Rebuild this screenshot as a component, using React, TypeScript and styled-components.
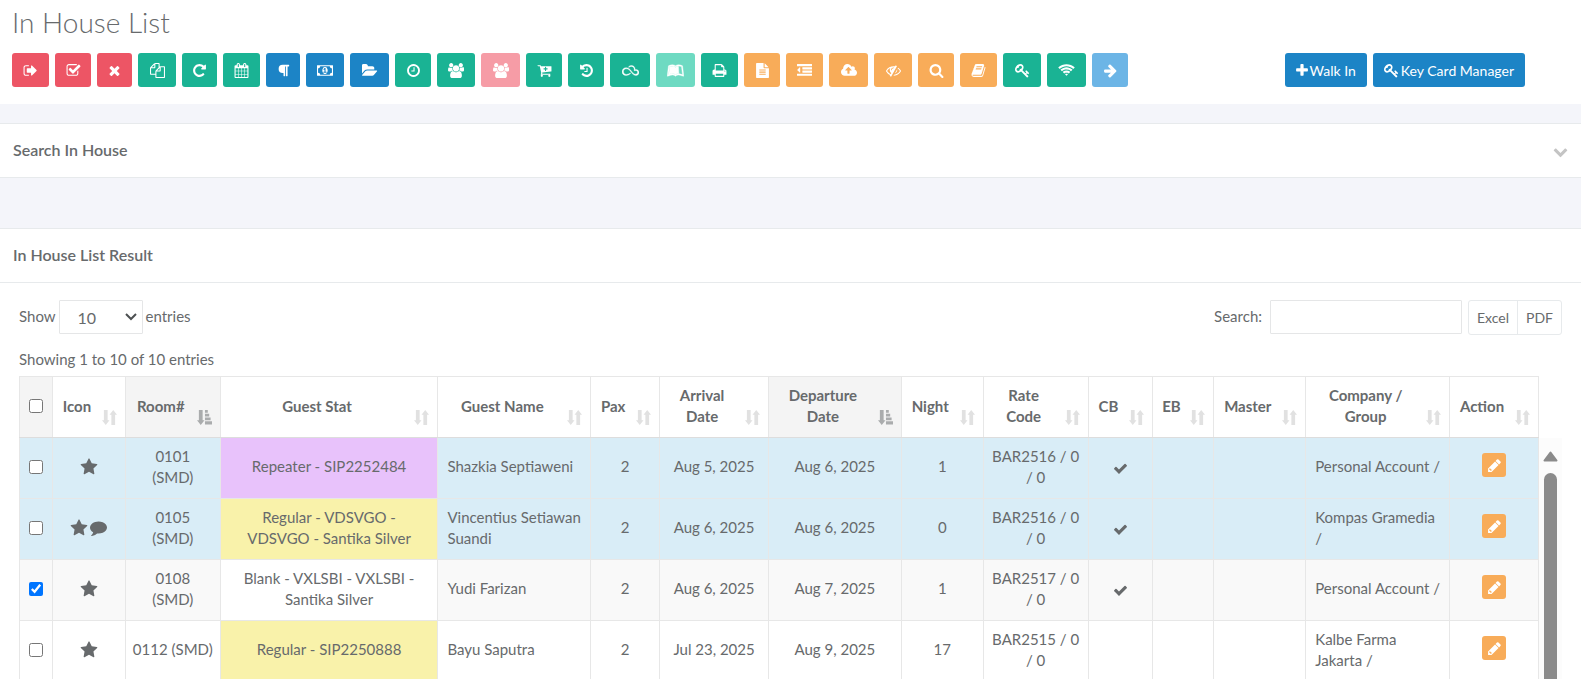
import React from 'react';
import styled, { createGlobalStyle, css } from 'styled-components';
import { FaLeanpub, FaParagraph, FaSkyatlas } from 'react-icons/fa';

const Global = createGlobalStyle`
  *, *::before, *::after { box-sizing: border-box; }
  body {
    margin: 0;
    background: #f4f5fa;
    color: #676a6c;
    font-family: Lato, "Noto Sans", sans-serif;
    font-size: 15px;
    line-height: 21px;
  }
  button, input, select { font: inherit; color: inherit; }
`;

/* ---------- icons ---------- */

const glyphs = {
  signOut: [1792, 'M704 1440q0 4 1 20t.5 26.500-3 23.500-10 19.500-20.500 6.500h-320q-119 0-203.500-84.500t-84.500-203.500v-704q0-119 84.500-203.500t203.500-84.500h320q13 0 22.500 9.500t9.500 22.500q0 4 1 20t.5 26.500-3 23.500-10 19.500-20.500 6.500h-320q-66 0-113 47t-47 113v704q0 66 47 113t113 47h312l11.500 1 11.500 3 8 5.500 7 9 2 13.500zm928-544q0 26-19 45l-544 544q-19 19-45 19t-45-19-19-45v-288h-448q-26 0-45-19t-19-45v-384q0-26 19-45t45-19h448v-288q0-26 19-45t45-19 45 19l544 544q19 19 19 45z'],
  checkSquare: [1792, 'M1472 930v318q0 119-84.500 203.500t-203.500 84.500h-832q-119 0-203.500-84.500t-84.500-203.500v-832q0-119 84.500-203.500t203.500-84.500h832q63 0 117 25 15 7 18 23 3 17-9 29l-49 49q-10 10-23 10-3 0-9-2-23-6-45-6h-832q-66 0-113 47t-47 113v832q0 66 47 113t113 47h832q66 0 113-47t47-113v-254q0-13 9-22l64-64q10-10 23-10 6 0 12 3 20 8 20 29zm231-489l-814 814q-24 24-57 24t-57-24l-430-430q-24-24-24-57t24-57l110-110q24-24 57-24t57 24l263 263 647-647q24-24 57-24t57 24l110 110q24 24 24 57t-24 57z'],
  times: [1792, 'M1490 1322q0 40-28 68l-136 136q-28 28-68 28t-68-28l-294-294-294 294q-28 28-68 28t-68-28l-136-136q-28-28-28-68t28-68l294-294-294-294q-28-28-28-68t28-68l136-136q28-28 68-28t68 28l294 294 294-294q28-28 68-28t68 28l136 136q28 28 28 68t-28 68l-294 294 294 294q28 28 28 68z'],
  files: [1792, 'M1696 384q40 0 68 28t28 68v1216q0 40-28 68t-68 28h-960q-40 0-68-28t-28-68v-288h-544q-40 0-68-28t-28-68v-672q0-40 20-88t48-76l408-408q28-28 76-48t88-20h416q40 0 68 28t28 68v328q68-40 128-40h416zm-544 213l-299 299h299v-299zm-640-384l-299 299h299v-299zm196 647l316-316v-416h-384v416q0 40-28 68t-68 28h-416v640h512v-256q0-40 20-88t48-76zm956 804v-1152h-384v416q0 40-28 68t-68 28h-416v640h896z'],
  repeat: [1792, 'M1664 256v448q0 26-19 45t-45 19h-448q-42 0-59-40-17-39 14-69l138-138q-148-137-349-137-104 0-198.500 40.500t-163.500 109.500-109.500 163.500-40.500 198.500 40.500 198.500 109.500 163.500 163.500 109.500 198.500 40.500q119 0 225-52t179-147q7-10 23-12 15 0 25 9l137 138q9 8 9.500 20.500t-7.500 22.500q-109 132-264 204.500t-327 72.500q-156 0-298-61t-245-164-164-245-61-298 61-298 164-245 245-164 298-61q147 0 284.500 55.500t244.500 156.500l130-129q29-31 70-14 39 17 39 59z'],
  calendar: [1792, 'M192 1664h288v-288h-288v288zm352 0h320v-288h-320v288zm-352-352h288v-320h-288v320zm352 0h320v-320h-320v320zm-352-384h288v-288h-288v288zm736 736h320v-288h-320v288zm-384-736h320v-288h-320v288zm768 736h288v-288h-288v288zm-384-352h320v-320h-320v320zm-352-864v-288q0-13-9.500-22.500t-22.500-9.500h-64q-13 0-22.500 9.500t-9.500 22.500v288q0 13 9.500 22.500t22.500 9.500h64q13 0 22.500-9.500t9.500-22.500zm736 864h288v-320h-288v320zm-384-384h320v-288h-320v288zm384 0h288v-288h-288v288zm32-480v-288q0-13-9.500-22.500t-22.500-9.500h-64q-13 0-22.500 9.500t-9.500 22.500v288q0 13 9.500 22.500t22.500 9.500h64q13 0 22.500-9.500t9.500-22.500zm384-64v1280q0 52-38 90t-90 38h-1408q-52 0-90-38t-38-90v-1280q0-52 38-90t90-38h128v-96q0-66 47-113t113-47h64q66 0 113 47t47 113v96h384v-96q0-66 47-113t113-47h64q66 0 113 47t47 113v96h128q52 0 90 38t38 90z'],
  money: [1920, 'M768 1152h384v-96h-128v-448h-114l-148 137 77 80q42-37 55-57h2v288h-128v96zm512-256q0 70-21 142t-59.5 134-101.500 101-138 39-138-39-101.500-101-59.500-134-21-142 21-142 59.500-134 101.500-101 138-39 138 39 101.500 101 59.500 134 21 142zm512 256v-512q-106 0-181-75t-75-181h-1152q0 106-75 181t-181 75v512q106 0 181 75t75 181h1152q0-106 75-181t181-75zm128-832v1152q0 26-19 45t-45 19h-1792q-26 0-45-19t-19-45v-1152q0-26 19-45t45-19h1792q26 0 45 19t19 45z'],
  folder: [1920, 'M1815 952q0 31-31 66l-336 396q-43 51-120.500 86.500t-143.500 35.500h-1088q-34 0-60.500-13t-26.500-43q0-31 31-66l336-396q43-51 120.500-86.500t143.500-35.500h1088q34 0 60.500 13t26.500 43zm-343-344v160h-832q-94 0-197 47.500t-164 119.500l-337 396-5 6q0-4-.5-12.500t-.5-12.500v-960q0-92 66-158t158-66h320q92 0 158 66t66 158v32h544q92 0 158 66t66 158z'],
  clock: [1792, 'M1024 544v448q0 14-9 23t-23 9h-320q-14 0-23-9t-9-23v-64q0-14 9-23t23-9h224v-352q0-14 9-23t23-9h64q14 0 23 9t9 23zm416 352q0-148-73-273t-198-198-273-73-273 73-198 198-73 273 73 273 198 198 273 73 273-73 198-198 73-273zm224 0q0 209-103 385.500t-279.500 279.500-385.500 103-385.500-103-279.500-279.500-103-385.500 103-385.500 279.500-279.500 385.500-103 385.500 103 279.500 279.500 103 385.500z'],
  users: [1920, 'M593 896q-162 5-265 128h-134q-82 0-138-40.500t-56-118.500q0-353 124-353 6 0 43.500 21t97.500 42.500 119 21.500q67 0 133-23-5 37-5 66 0 159 93 293zm1071 637q0 120-73 189.500t-194 69.500h-874q-121 0-194-69.500t-73-189.500q0-53 3.500-103.500t14-109 26.500-108.500 43-97.500 62-81 85.500-53.500 111.500-20q10 0 43 21.500t73 48 107 48 135 21.500 135-21.500 107-48 73-48 43-21.500q61 0 111.500 20t85.500 53.500 62 81 43 97.500 26.500 108.500 14 109 3.500 103.500zm-1024-1277q0 106-75 181t-181 75-181-75-75-181 75-181 181-75 181 75 75 181zm704 384q0 159-112.500 271.500t-271.500 112.500-271.500-112.500-112.500-271.500 112.500-271.500 271.500-112.500 271.500 112.500 112.500 271.500zm576 225q0 78-56 118.500t-138 40.500h-134q-103-123-265-128 93-134 93-293 0-29-5-66 66 23 133 23 59 0 119-21.500t97.500-42.500 43.500-21q124 0 124 353zm-128-609q0 106-75 181t-181 75-181-75-75-181 75-181 181-75 181 75 75 181z'],
  cart: [1792, 'M1280 704q0-26-19-45t-45-19h-128v-128q0-26-19-45t-45-19-45 19-19 45v128h-128q-26 0-45 19t-19 45 19 45 45 19h128v128q0 26 19 45t45 19 45-19 19-45v-128h128q26 0 45-19t19-45zm-576 832q0 53-37.500 90.500t-90.500 37.500-90.500-37.500-37.500-90.500 37.500-90.500 90.500-37.500 90.500 37.500 37.500 90.500zm896 0q0 53-37.500 90.500t-90.500 37.500-90.500-37.500-37.500-90.500 37.500-90.500 90.500-37.500 90.500 37.500 37.500 90.500zm128-1088v512q0 24-16 42.500t-41 21.500l-1044 122q1 7 4.500 21.500t6 26.500 2.500 22q0 16-24 64h920q26 0 45 19t19 45-19 45-45 19h-1024q-26 0-45-19t-19-45q0-14 11-39.500t29.500-59.500 20.500-38l-177-823h-204q-26 0-45-19t-19-45 19-45 45-19h256q16 0 28.500 6.500t20 15.500 13 24.500 7.500 26.500 5.500 29.500 4.500 25.500h1201q26 0 45 19t19 45z'],
  history: [1792, 'M1664 896q0 156-61 298t-164 245-245 164-298 61q-172 0-327-72.500t-264-204.500q-7-10-6.500-22.500t8.500-20.500l137-138q10-9 25-9 16 2 23 12 73 95 179 147t225 52q104 0 198.500-40.500t163.500-109.500 109.500-163.500 40.500-198.500-40.500-198.500-109.500-163.500-163.500-109.500-198.500-40.500q-98 0-188 35.500t-160 101.500l137 138q31 30 14 69-17 40-59 40h-448q-26 0-45-19t-19-45v-448q0-42 40-59 39-17 69 14l130 129q107-101 244.500-156.500t284.500-55.500q156 0 298 61t245 164 164 245 61 298zm-640-288v448q0 14-9 23t-23 9h-320q-14 0-23-9t-9-23v-64q0-14 9-23t23-9h224v-352q0-14 9-23t23-9h64q14 0 23 9t9 23z'],
  print: [1792, 'M448 1536h896v-256h-896v256zm0-640h896v-384h-160q-40 0-68-28t-28-68v-160h-640v640zm1152 64q0-26-19-45t-45-19-45 19-19 45 19 45 45 19 45-19 19-45zm128 0v416q0 13-9.500 22.500t-22.500 9.500h-224v160q0 40-28 68t-68 28h-960q-40 0-68-28t-28-68v-160h-224q-13 0-22.500-9.500t-9.500-22.500v-416q0-79 56.500-135.500t135.500-56.500h64v-544q0-40 28-68t68-28h672q40 0 88 20t76 48l152 152q28 28 48 76t20 88v256h64q79 0 135.500 56.500t56.500 135.500z'],
  fileText: [1792, 'M1596 476q14 14 28 36h-472v-472q22 14 36 28zm-476 164h544v1056q0 40-28 68t-68 28h-1344q-40 0-68-28t-28-68v-1600q0-40 28-68t68-28h800v544q0 40 28 68t68 28zm160 736v-64q0-14-9-23t-23-9h-704q-14 0-23 9t-9 23v64q0 14 9 23t23 9h704q14 0 23-9t9-23zm0-256v-64q0-14-9-23t-23-9h-704q-14 0-23 9t-9 23v64q0 14 9 23t23 9h704q14 0 23-9t9-23zm0-256v-64q0-14-9-23t-23-9h-704q-14 0-23 9t-9 23v64q0 14 9 23t23 9h704q14 0 23-9t9-23z'],
  outdent: [1792, 'M384 544v576q0 13-9.500 22.500t-22.500 9.500q-14 0-23-9l-288-288q-9-9-9-23t9-23l288-288q9-9 23-9 13 0 22.500 9.500t9.500 22.500zm1408 768v192q0 13-9.500 22.500t-22.500 9.500h-1728q-13 0-22.500-9.500t-9.500-22.500v-192q0-13 9.500-22.500t22.500-9.500h1728q13 0 22.500 9.500t9.500 22.500zm0-384v192q0 13-9.500 22.500t-22.500 9.500h-1088q-13 0-22.500-9.500t-9.500-22.500v-192q0-13 9.500-22.500t22.500-9.500h1088q13 0 22.500 9.500t9.500 22.500zm0-384v192q0 13-9.500 22.500t-22.500 9.500h-1088q-13 0-22.500-9.500t-9.500-22.500v-192q0-13 9.500-22.500t22.500-9.500h1088q13 0 22.500 9.500t9.500 22.500zm0-384v192q0 13-9.500 22.500t-22.500 9.500h-1728q-13 0-22.500-9.500t-9.500-22.500v-192q0-13 9.500-22.500t22.500-9.500h1728q13 0 22.500 9.500t9.500 22.500z'],
  cloudUp: [1920, 'M1280 864q0-14-9-23l-352-352q-9-9-23-9t-23 9l-351 351q-10 12-10 24 0 14 9 23t23 9h224v352q0 13 9.500 22.500t22.500 9.500h192q13 0 22.500-9.500t9.500-22.500v-352h224q13 0 22.500-9.500t9.500-22.500zm640 288q0 159-112.500 271.500t-271.500 112.500h-1088q-185 0-316.500-131.500t-131.500-316.500q0-130 70-240t188-165q-2-30-2-43 0-212 150-362t362-150q156 0 285.500 87t188.500 231q71-62 166-62 106 0 181 75t75 181q0 76-41 138 130 31 213.500 135.500t83.500 238.500z'],
  eyeSlash: [1792, 'M555 1335l78-141q-87-63-136-159t-49-203q0-121 61-225-229 117-381 353 167 258 427 375zm389-759q0-20-14-34t-34-14q-125 0-214.500 89.500t-89.500 214.500q0 20 14 34t34 14 34-14 14-34q0-86 61-147t147-61q20 0 34-14t14-34zm363-191q0 7-1 9-106 189-316 567t-315 566l-49 89q-10 16-28 16-12 0-134-70-16-10-16-28 0-12 44-87-143-65-263.500-173t-208.500-245q-20-31-20-69t20-69q153-235 380-371t496-136q89 0 180 17l54-97q10-16 28-16 5 0 18 6t31 15.500 33 18.500 31.500 18.500 19.500 11.500q16 10 16 27zm37 447q0 139-79 253.500t-209 164.500l280-502q8 45 8 84zm448 128q0 35-20 69-39 64-109 145-150 172-347.500 267t-419.500 95l74-132q212-18 392.500-137t301.500-307q-115-179-282-294l63-112q95 64 182.500 153t144.500 184q20 34 20 69z'],
  search: [1792, 'M1216 832q0-185-131.500-316.500t-316.500-131.500-316.500 131.500-131.500 316.500 131.500 316.500 316.500 131.500 316.500-131.500 131.500-316.500zm512 832q0 52-38 90t-90 38q-54 0-90-38l-343-342q-179 124-399 124-143 0-273.500-55.500t-225-150-150-225-55.500-273.500 55.500-273.500 150-225 225-150 273.500-55.500 273.500 55.500 225 150 150 225 55.500 273.500q0 220-124 399l343 343q37 37 37 90z'],
  book: [1792, 'M1703 478q40 57 18 129l-275 906q-19 64-76.500 107.500t-122.500 43.500h-923q-77 0-148.500-53.500t-99.500-131.500q-24-67-2-127 0-4 3-27t4-37q1-8-3-21.500t-3-19.500q2-11 8-21t16.500-23.500 16.500-23.500q23-38 45-91.500t30-91.500q3-10 .5-30t-.5-28q3-11 17-28t17-23q21-36 42-92t25-90q1-9-2.500-32t.5-28q4-13 22-30.500t22-22.500q19-26 42.500-84.500t27.500-96.500q1-8-3-25.500t-2-26.500q2-8 9-18t18-23 17-21q8-12 16.500-30.500t15-35 16-36 19.500-32 26.500-23.500 36-11.500 47.500 5.500l-1 3q38-9 51-9h761q74 0 114 56t18 130l-274 906q-36 119-71.500 153.500t-128.500 34.500h-869q-27 0-38 15-11 16-1 43 24 70 144 70h923q29 0 56-15.500t35-41.500l300-987q7-22 5-57 38 15 59 43zm-1064 2q-4 13 2 22.500t20 9.500h608q13 0 25.500-9.500t16.500-22.500l21-64q4-13-2-22.500t-20-9.500h-608q-13 0-25.500 9.500t-16.500 22.500zm-83 256q-4 13 2 22.500t20 9.500h608q13 0 25.500-9.500t16.500-22.500l21-64q4-13-2-22.500t-20-9.500h-608q-13 0-25.500 9.500t-16.500 22.500z'],
  key: [1792, 'M832 512q0-80-56-136t-136-56-136 56-56 136q0 42 19 83-41-19-83-19-80 0-136 56t-56 136 56 136 136 56 136-56 56-136q0-42-19-83 41 19 83 19 80 0 136-56t56-136zm851 704q0 17-49 66t-66 49q-9 0-28.500-16t-36.500-33-38.500-40-24.500-26l-96 96 220 220q28 28 28 68 0 42-39 81t-81 39q-40 0-68-28l-671-671q-176 131-365 131-163 0-265.500-102.500t-102.500-265.500q0-160 95-313t248-248 313-95q163 0 265.500 102.500t102.500 265.500q0 189-131 365l355 355 96-96q-3-3-26-24.500t-40-38.500-33-36.500-16-28.500q0-17 49-66t66-49q13 0 23 10 6 6 46 44.500t82 79.500 86.500 86 73 78 28.500 41z'],
  wifi: [2048, 'M1024 1523q-20 0-93-73.500t-73-93.500q0-32 62.500-54t103.500-22 103.500 22 62.500 54q0 20-73 93.500t-93 73.500zm270-271q-2 0-40-25t-101.500-50-128.500-25-128.500 25-101 50-40.500 25q-18 0-93.500-75t-75.500-93q0-13 10-23 78-77 196-121t233-44 233 44 196 121q10 10 10 23 0 18-75.500 93t-93.500 75zm273-272q-11 0-23-8-136-105-252-154.500t-268-49.500q-85 0-170.500 22t-149 53-113.500 62-79 53-31 22q-17 0-92-75t-75-93q0-12 10-22 132-132 320-205t380-73 380 73 320 205q10 10 10 22 0 18-75 93t-92 75zm271-271q-11 0-22-9-179-157-371.500-236.500t-420.500-79.500-420.500 79.500-371.500 236.500q-11 9-22 9-17 0-92.500-75t-75.500-93q0-13 10-23 187-186 445-288t527-102 527 102 445 288q10 10 10 23 0 18-75.500 93t-92.500 75z'],
  arrowRight: [1792, 'M1600 960q0 54-37 91l-651 651q-39 37-91 37-51 0-90-37l-75-75q-38-38-38-91t38-91l293-293h-704q-52 0-84.500-37.500t-32.500-90.500v-128q0-53 32.500-90.500t84.500-37.500h704l-293-294q-38-36-38-90t38-90l75-75q38-38 90-38 53 0 91 38l651 651q37 35 37 90z'],
  plus: [1408, 'M1408 736v192q0 40-28 68t-68 28h-416v416q0 40-28 68t-68 28h-192q-40 0-68-28t-28-68v-416h-416q-40 0-68-28t-28-68v-192q0-40 28-68t68-28h416v-416q0-40 28-68t68-28h192q40 0 68 28t28 68v416h416q40 0 68 28t28 68z'],
  chevron: [1792, 'M1683 808l-742 741q-19 19-45 19t-45-19l-742-741q-19-19-19-45.500t19-45.500l166-165q19-19 45-19t45 19l531 531 531-531q19-19 45-19t45 19l166 165q19 19 19 45.500t-19 45.500z'],
  star: [1792, 'M1728 647q0 22-26 48l-363 354 86 500q1 7 1 20 0 21-10.500 35.500t-30.500 14.500q-19 0-40-12l-449-236-449 236q-22 12-40 12-21 0-31.500-14.500t-10.500-35.500q0-6 2-20l86-500-364-354q-25-27-25-48 0-37 56-46l502-73 225-455q19-41 49-41t49 41l225 455 502 73q56 9 56 46z'],
  comment: [1792, 'M1792 896q0 174-120 321.500t-326 233-450 85.500q-70 0-145-8-198 175-460 242-49 14-114 22-17 2-30.500-9t-17.500-29v-1q-3-4-.5-12t2-10 4.500-9.500l6-9 7-8.500 8-9q7-8 31-34.500t34.500-38 31-39.500 32.500-51 27-59 26-76q-157-89-247.500-220t-90.500-281q0-130 71-248.500t191-204.500 286-136.500 348-50.500q244 0 450 85.500t326 233 120 321.500z'],
  check: [1792, 'M1671 566q0 40-28 68l-724 724-136 136q-28 28-68 28t-68-28l-136-136-362-362q-28-28-28-68t28-68l136-136q28-28 68-28t68 28l294 295 656-657q28-28 68-28t68 28l136 136q28 28 28 68z'],
  pencil: [1792, 'M491 1536l91-91-235-235-91 91v107h128v128h107zM960 416l416 416-832 832h-416v-416zM1643 512q0 53-37 90l-166 166-416-416 166-165q36-38 90-38 53 0 91 38l235 234q37 39 37 91z'],
} satisfies Record<string, [number, string]>;

type GlyphName = keyof typeof glyphs;

const Svg = styled.svg`
  display: inline-block;
  flex: none;
  fill: currentColor;
  vertical-align: middle;
`;

const Glyph = ({ name, size = 15 }: { name: GlyphName; size?: number }) => {
  const [w, d] = glyphs[name];
  return (
    <Svg viewBox={`0 0 ${w} 1792`} width={Math.round((w * size) / 1792)} height={size} aria-hidden="true">
      <path d={d} />
    </Svg>
  );
};

const SortIcon = ({ active }: { active?: boolean }) => (
  <Svg viewBox="0 0 16 16" width="15" height="15" aria-hidden="true">
    <path d="M2 0h4v11h2L4 16 0 11h2z" />
    {active ? (
      <path d="M8.500 0h3v3h-3zM8.500 4h4.500v3H8.500zM8.500 8h6v3h-6zM8.500 12H16v3.500H8.500z" />
    ) : (
      <path d="M10 16h4V5h2l-4-5-4 5h2z" />
    )}
  </Svg>
);

/* ---------- page ---------- */

const Page = styled.main`
  display: flex;
  flex-direction: column;
  height: 100vh;
  overflow: hidden;
`;

const Heading = styled.header`
  padding: 8px 12px 17px;
  background: #fff;
`;

const Title = styled.h1`
  margin: 0 0 17px;
  font-size: 28px;
  font-weight: 300;
  line-height: 28px;
`;

const Toolbar = styled.div`
  display: flex;
  justify-content: space-between;
  padding-right: 44px;
`;

const ButtonRow = styled.div`
  display: flex;
  gap: 6px;
`;

const tones = {
  red: '#ed5565',
  pink: '#f69ca6',
  green: '#1ab394',
  mint: '#6edac2',
  blue: '#1c84c6',
  sky: '#6cb5e6',
  orange: '#f8ac59',
};

const ToolButton = styled.button<{ $tone: keyof typeof tones; $width?: number }>`
  display: flex;
  align-items: center;
  justify-content: center;
  gap: 2px;
  width: ${p => (p.$width ? `${p.$width}px` : 'auto')};
  height: 34px;
  padding: 0 ${p => (p.$width ? 0 : 11)}px;
  border: 0;
  border-radius: 3px;
  background: ${p => tones[p.$tone]};
  color: #fff;
  font-size: 14px;
  white-space: nowrap;
`;

const Panel = styled.section<{ $fill?: boolean }>`
  margin-top: ${p => (p.$fill ? 50 : 19)}px;
  border-top: 1px solid #e7eaec;
  border-bottom: ${p => (p.$fill ? 0 : 1)}px solid #e7eaec;
  background: #fff;
  ${p => p.$fill && css`
    display: flex;
    flex: 1;
    flex-direction: column;
    min-height: 0;
  `}
`;

const PanelHead = styled.div<{ $ruled?: boolean }>`
  display: flex;
  align-items: center;
  justify-content: space-between;
  height: ${p => (p.$ruled ? 54 : 53)}px;
  padding: 0 13px 3px;
  border-bottom: ${p => (p.$ruled ? 1 : 0)}px solid #e7eaec;
`;

const PanelTitle = styled.h2`
  margin: 0;
  font-size: 16px;
  font-weight: 600;
`;

const Collapse = styled.button`
  padding: 2px 0 0;
  border: 0;
  background: none;
  color: #c4c4c4;
  line-height: 16px;
`;

const PanelBody = styled.div`
  display: flex;
  flex: 1;
  flex-direction: column;
  min-height: 0;
  padding: 17px 19px 0;
`;

const Controls = styled.div`
  display: flex;
  justify-content: space-between;
  align-items: flex-start;
`;

const Field = styled.label`
  display: flex;
  gap: 3px;
  line-height: 32px;
`;

const LengthBox = styled.span`
  position: relative;
  display: flex;
  align-items: center;
`;

const Length = styled.select`
  width: 84px;
  height: 34px;
  padding: 1px 12px 0 18px;
  border: 1px solid #e5e6e7;
  border-radius: 1px;
  background: #fff;
  font-size: 16px;
  appearance: none;
`;

const LengthArrow = styled.svg`
  position: absolute;
  right: 6px;
  fill: none;
  stroke: #4d5052;
  stroke-width: 2;
  pointer-events: none;
`;

const SearchSide = styled.div`
  display: flex;
  gap: 6px;
`;

const SearchInput = styled.input`
  width: 192px;
  height: 34px;
  margin-left: 5px;
  border: 1px solid #e5e6e7;
  border-radius: 1px;
  background: #fff;
`;

const ExportGroup = styled.div`
  display: flex;
  height: 35px;
  border: 1px solid #e7eaec;
  border-radius: 3px;
`;

const ExportButton = styled.button`
  padding: 0 8px;
  border: 0;
  background: none;
  font-size: 14px;

  & + & { border-left: 1px solid #e7eaec; }
`;

const Info = styled.p`
  margin: 14px 0 6px;
`;

const TableArea = styled.div`
  display: flex;
  flex: 1;
  min-height: 0;
  overflow: hidden;
`;

const Table = styled.table`
  flex: 1;
  width: 100%;
  height: max-content;
  border-collapse: collapse;
  table-layout: fixed;
`;

const Th = styled.th<{ $shaded?: boolean; $plain?: boolean }>`
  position: relative;
  height: 61px;
  padding: 0 ${p => (p.$plain ? 4 : 32)}px 2px ${p => (p.$plain ? 4 : 8)}px;
  border: 1px solid #e7e7e7;
  border-bottom-color: #ddd;
  background: ${p => (p.$shaded ? '#f4f4f4' : '#fff')};
  font-weight: 700;
`;

const SortMark = styled.span<{ $active?: boolean }>`
  position: absolute;
  right: 8px;
  bottom: 12px;
  display: flex;
  color: ${p => (p.$active ? '#aaacad' : '#e1e1e1')};
`;

const Tr = styled.tr<{ $bg: string }>`
  background: ${p => p.$bg};
`;

const Td = styled.td<{ $left?: boolean; $tight?: boolean; $bg?: string }>`
  height: 61px;
  padding: 0 ${p => (p.$tight ? 4 : 9)}px 3px;
  border: 1px solid #e7e7e7;
  background: ${p => p.$bg ?? 'transparent'};
  text-align: ${p => (p.$left ? 'left' : 'center')};
  white-space: ${p => (p.$tight ? 'pre-line' : 'normal')};
`;

const Tick = styled.input`
  display: block;
  width: 14px;
  height: 14px;
  margin: 0 auto;
`;

const IconPair = styled.span`
  display: flex;
  align-items: center;
  justify-content: center;
  gap: 2px;
`;

const EditButton = styled.button`
  display: flex;
  align-items: center;
  justify-content: center;
  width: 24px;
  height: 24px;
  margin: 0 auto 3px;
  padding: 0;
  border: 0;
  border-radius: 3px;
  background: #f8ac59;
  color: #fff;
`;

const ScrollTrack = styled.div`
  display: flex;
  flex: none;
  flex-direction: column;
  align-items: center;
  gap: 11px;
  width: 23px;
  margin-top: 62px;
  padding-top: 13px;
  background: #fcfcfc;
`;

const ScrollThumb = styled.div`
  flex: 1;
  width: 13px;
  border-radius: 7px 7px 0 0;
  background: #8b8b8b;
`;

/* ---------- data ---------- */

type Tool = { label: string; tone: keyof typeof tones; width: number; icon: GlyphName | React.ReactNode };

const tools: Tool[] = [
  { label: 'Check out', tone: 'red', width: 37, icon: 'signOut' },
  { label: 'Confirm', tone: 'red', width: 36, icon: 'checkSquare' },
  { label: 'Cancel', tone: 'red', width: 35, icon: 'times' },
  { label: 'Copy', tone: 'green', width: 38, icon: 'files' },
  { label: 'Repeat', tone: 'green', width: 35, icon: 'repeat' },
  { label: 'Calendar', tone: 'green', width: 37, icon: 'calendar' },
  { label: 'Remarks', tone: 'blue', width: 34, icon: <FaParagraph size={13} /> },
  { label: 'Payment', tone: 'blue', width: 38, icon: 'money' },
  { label: 'Folio', tone: 'blue', width: 39, icon: 'folder' },
  { label: 'Time', tone: 'green', width: 36, icon: 'clock' },
  { label: 'Group', tone: 'green', width: 38, icon: 'users' },
  { label: 'Ungroup', tone: 'pink', width: 39, icon: 'users' },
  { label: 'Add charge', tone: 'green', width: 36, icon: 'cart' },
  { label: 'History', tone: 'green', width: 36, icon: 'history' },
  { label: 'Link', tone: 'green', width: 40, icon: <FaSkyatlas size={17} stroke="#fff" strokeWidth={14} /> },
  { label: 'Guide', tone: 'mint', width: 39, icon: <FaLeanpub size={17} stroke="#fff" strokeWidth={14} /> },
  { label: 'Print', tone: 'green', width: 37, icon: 'print' },
  { label: 'Report', tone: 'orange', width: 36, icon: 'fileText' },
  { label: 'Outdent', tone: 'orange', width: 37, icon: 'outdent' },
  { label: 'Upload', tone: 'orange', width: 39, icon: 'cloudUp' },
  { label: 'Hide', tone: 'orange', width: 38, icon: 'eyeSlash' },
  { label: 'Search', tone: 'orange', width: 36, icon: 'search' },
  { label: 'Log book', tone: 'orange', width: 37, icon: 'book' },
  { label: 'Key', tone: 'green', width: 38, icon: 'key' },
  { label: 'Wifi', tone: 'green', width: 39, icon: 'wifi' },
  { label: 'Next', tone: 'sky', width: 36, icon: 'arrowRight' },
];

const columns: { label: string; share: number; sorted?: boolean }[] = [
  { label: 'Icon', share: 73 },
  { label: 'Room#', share: 95, sorted: true },
  { label: 'Guest Stat', share: 218 },
  { label: 'Guest Name', share: 153 },
  { label: 'Pax', share: 69 },
  { label: 'Arrival Date', share: 109 },
  { label: 'Departure Date', share: 133, sorted: true },
  { label: 'Night', share: 82 },
  { label: 'Rate Code', share: 105 },
  { label: 'CB', share: 65 },
  { label: 'EB', share: 61 },
  { label: 'Master', share: 92 },
  { label: 'Company / Group', share: 144 },
  { label: 'Action', share: 89 },
];
const CHECK_SHARE = 33;
const totalShare = columns.reduce((sum, c) => sum + c.share, CHECK_SHARE);

const Col = styled.col<{ $share: number }>`
  width: ${p => (p.$share / totalShare) * 100}%;
`;

const guests = [
  { room: '0101\n(SMD)', stat: 'Repeater - SIP2252484', statBg: '#e8c2fb', name: 'Shazkia Septiaweni', pax: 2, arrive: 'Aug 5, 2025', depart: 'Aug 6, 2025', night: 1, rate: 'BAR2516 / 0\n/ 0', cb: true, company: 'Personal Account /', bg: '#d9edf7' },
  { room: '0105\n(SMD)', stat: 'Regular - VDSVGO - VDSVGO - Santika Silver', statBg: '#f9f2aa', name: 'Vincentius Setiawan Suandi', pax: 2, arrive: 'Aug 6, 2025', depart: 'Aug 6, 2025', night: 0, rate: 'BAR2516 / 0\n/ 0', cb: true, company: 'Kompas Gramedia /', note: true, bg: '#d9edf7' },
  { room: '0108\n(SMD)', stat: 'Blank - VXLSBI - VXLSBI - Santika Silver', statBg: '#fff', name: 'Yudi Farizan', pax: 2, arrive: 'Aug 6, 2025', depart: 'Aug 7, 2025', night: 1, rate: 'BAR2517 / 0\n/ 0', cb: true, company: 'Personal Account /', checked: true, bg: '#f9f9f9' },
  { room: '0112 (SMD)', stat: 'Regular - SIP2250888', statBg: '#f9f2aa', name: 'Bayu Saputra', pax: 2, arrive: 'Jul 23, 2025', depart: 'Aug 9, 2025', night: 17, rate: 'BAR2515 / 0\n/ 0', cb: false, company: 'Kalbe Farma Jakarta /', bg: '#fff' },
];

export default function App() {
  return (
    <Page>
      <Global />
      <Heading>
        <Title>In House List</Title>
        <Toolbar>
          <ButtonRow>
            {tools.map(t => (
              <ToolButton key={t.label} type="button" aria-label={t.label} $tone={t.tone} $width={t.width}>
                {typeof t.icon === 'string' ? <Glyph name={t.icon as GlyphName} /> : t.icon}
              </ToolButton>
            ))}
          </ButtonRow>
          <ButtonRow>
            <ToolButton type="button" $tone="blue"><Glyph name="plus" />Walk In</ToolButton>
            <ToolButton type="button" $tone="blue"><Glyph name="key" />Key Card Manager</ToolButton>
          </ButtonRow>
        </Toolbar>
      </Heading>

      <Panel>
        <PanelHead>
          <PanelTitle>Search In House</PanelTitle>
          <Collapse type="button" aria-label="Expand search"><Glyph name="chevron" /></Collapse>
        </PanelHead>
      </Panel>

      <Panel $fill>
        <PanelHead $ruled>
          <PanelTitle>In House List Result</PanelTitle>
        </PanelHead>
        <PanelBody>
          <Controls>
            <Field>
              Show
              <LengthBox>
                <Length defaultValue="10">
                  <option>10</option>
                  <option>25</option>
                  <option>50</option>
                </Length>
                <LengthArrow width="12" height="8" viewBox="0 0 12 8" aria-hidden="true">
                  <path d="M1 1l5 5 5-5" />
                </LengthArrow>
              </LengthBox>
              entries
            </Field>
            <SearchSide>
              <Field>Search:<SearchInput type="search" /></Field>
              <ExportGroup>
                <ExportButton type="button">Excel</ExportButton>
                <ExportButton type="button">PDF</ExportButton>
              </ExportGroup>
            </SearchSide>
          </Controls>
          <Info>Showing 1 to 10 of 10 entries</Info>
          <TableArea>
            <Table>
              <colgroup>
                <Col $share={CHECK_SHARE} />
                {columns.map(c => <Col key={c.label} $share={c.share} />)}
              </colgroup>
              <thead>
                <tr>
                  <Th $shaded $plain><Tick type="checkbox" aria-label="Select all" /></Th>
                  {columns.map(c => (
                    <Th key={c.label} $shaded={c.sorted} scope="col">
                      {c.label}
                      <SortMark $active={c.sorted}><SortIcon active={c.sorted} /></SortMark>
                    </Th>
                  ))}
                </tr>
              </thead>
              <tbody>
                {guests.map(g => (
                  <Tr key={g.room} $bg={g.bg}>
                    <Td><Tick type="checkbox" aria-label={`Select ${g.room}`} defaultChecked={g.checked} /></Td>
                    <Td>
                      <IconPair>
                        <Glyph name="star" size={18} />
                        {g.note && <Glyph name="comment" size={17} />}
                      </IconPair>
                    </Td>
                    <Td $tight>{g.room}</Td>
                    <Td $bg={g.statBg}>{g.stat}</Td>
                    <Td $left>{g.name}</Td>
                    <Td>{g.pax}</Td>
                    <Td>{g.arrive}</Td>
                    <Td>{g.depart}</Td>
                    <Td>{g.night}</Td>
                    <Td $tight>{g.rate}</Td>
                    <Td>{g.cb && <Glyph name="check" />}</Td>
                    <Td />
                    <Td />
                    <Td $left>{g.company}</Td>
                    <Td><EditButton type="button" aria-label={`Edit ${g.room}`}><Glyph name="pencil" /></EditButton></Td>
                  </Tr>
                ))}
              </tbody>
            </Table>
            <ScrollTrack>
              <svg width="15" height="11" viewBox="0 0 15 11" aria-hidden="true">
                <path d="M7.500 1.500L13.500 9.500H1.500z" fill="#8b8b8b" stroke="#8b8b8b" strokeWidth="2" strokeLinejoin="round" />
              </svg>
              <ScrollThumb />
            </ScrollTrack>
          </TableArea>
        </PanelBody>
      </Panel>
    </Page>
  );
}
